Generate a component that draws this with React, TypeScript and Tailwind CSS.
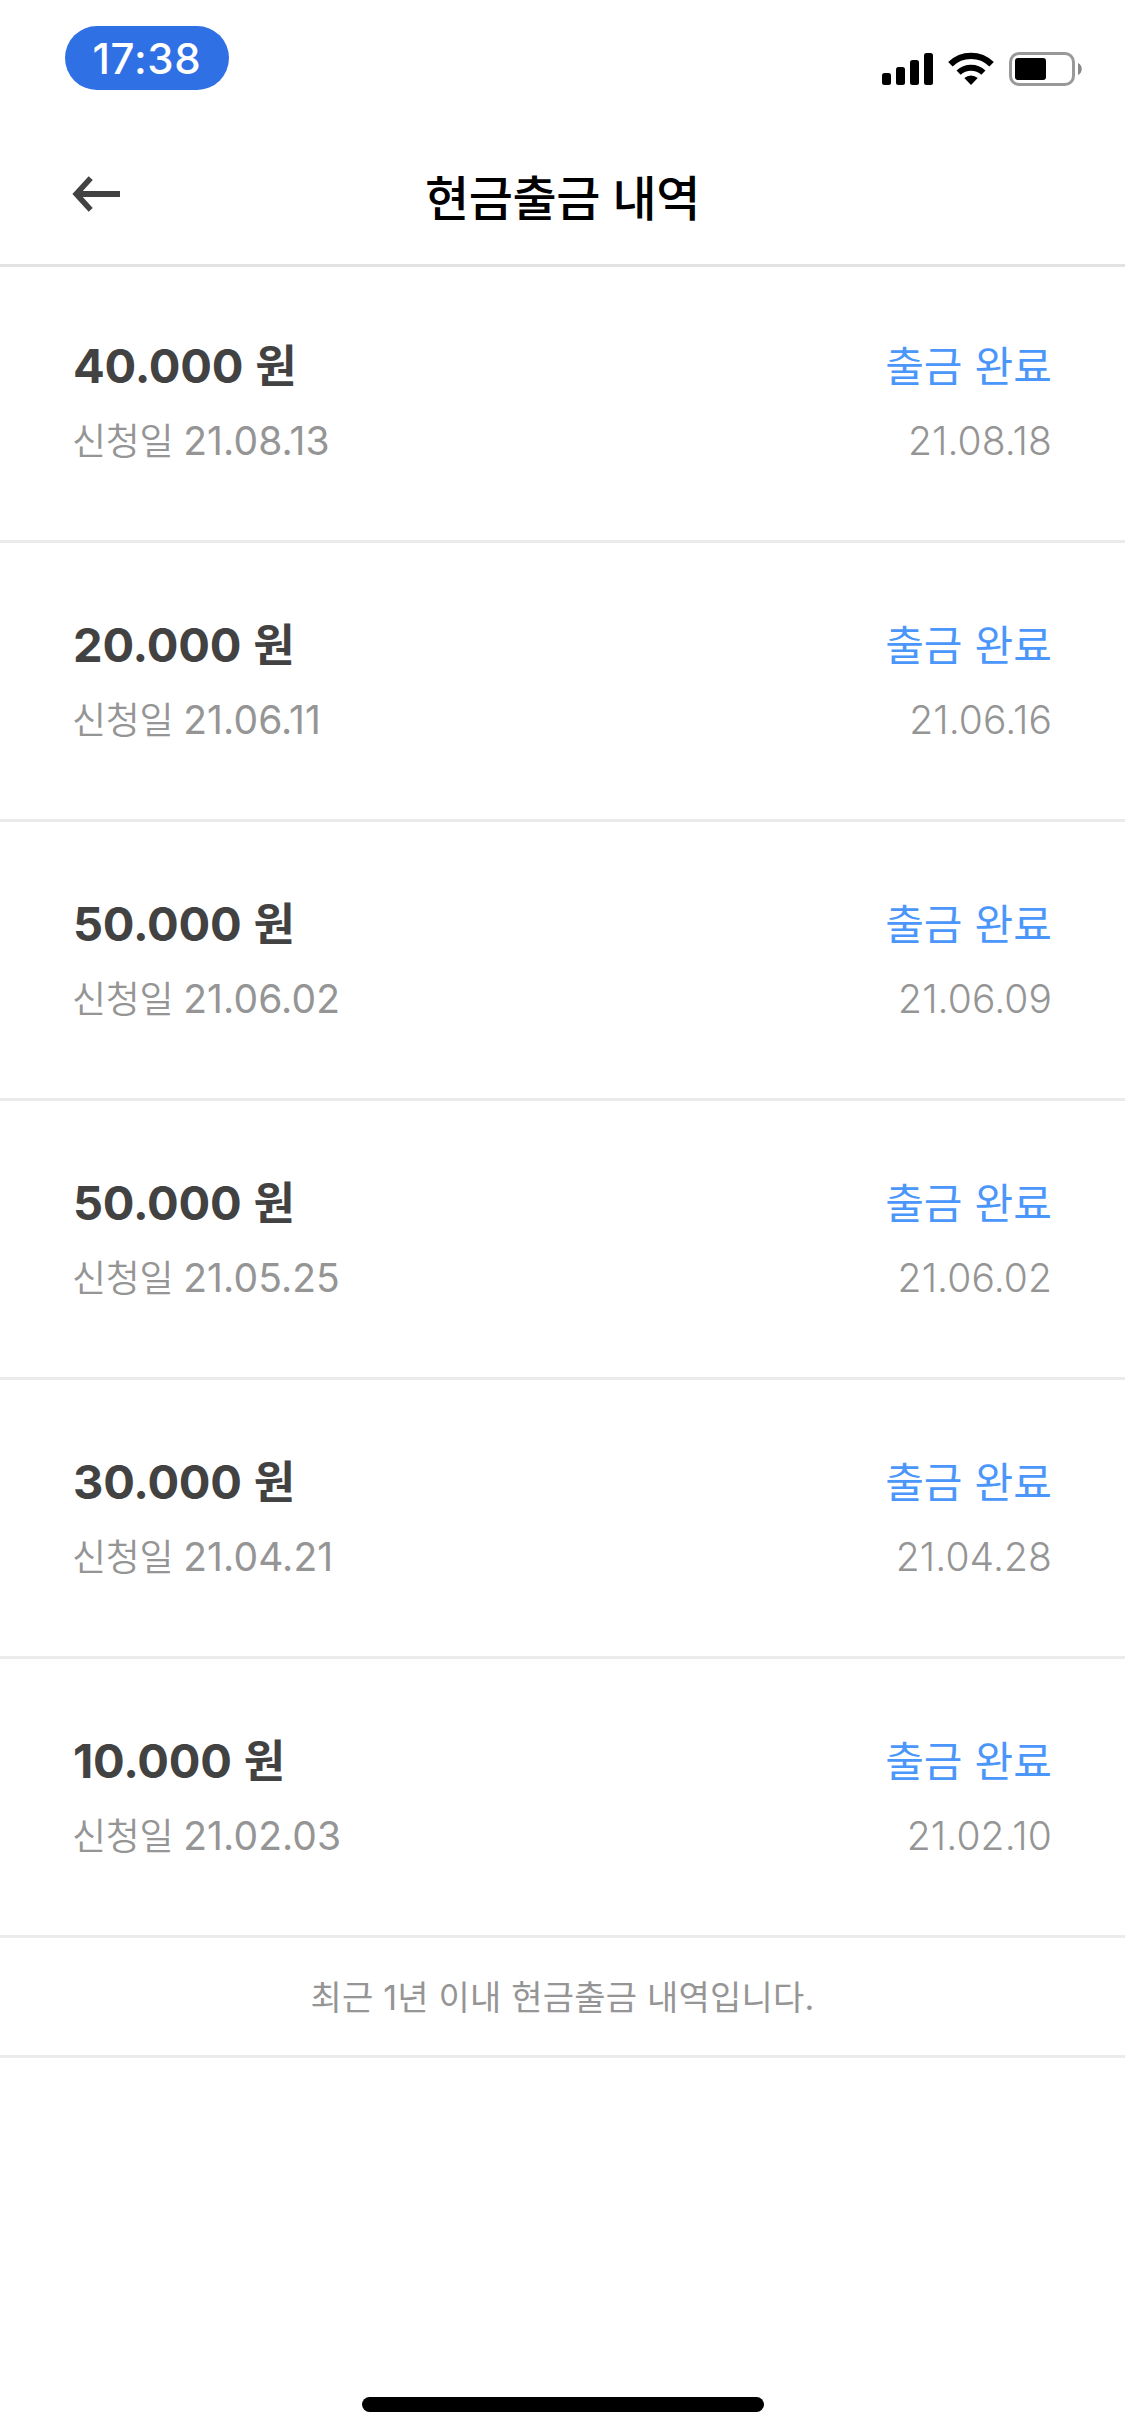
const withdrawals = [
  { amount: '40.000', requested: '21.08.13', completed: '21.08.18' },
  { amount: '20.000', requested: '21.06.11', completed: '21.06.16' },
  { amount: '50.000', requested: '21.06.02', completed: '21.06.09' },
  { amount: '50.000', requested: '21.05.25', completed: '21.06.02' },
  { amount: '30.000', requested: '21.04.21', completed: '21.04.28' },
  { amount: '10.000', requested: '21.02.03', completed: '21.02.10' },
]

function StatusBar() {
  return (
    <div className="flex h-[116px] items-start justify-between pl-[65px] pr-[42px]">
      <div className="mt-[26px] flex h-16 w-[164px] items-center justify-center rounded-full bg-[#3070e5] pt-px text-[42px] font-medium leading-none tracking-[0.7px] text-white">
        17:38
      </div>
      <div className="mt-[52px] flex items-start">
        <svg width="52" height="34" viewBox="0 0 52 34">
          <rect x="0" y="21" width="9" height="12" rx="2.5" />
          <rect x="14" y="15" width="9" height="18" rx="2.5" />
          <rect x="28" y="8" width="9" height="25" rx="2.5" />
          <rect x="42" y="1" width="9" height="32" rx="2.5" />
        </svg>
        <svg className="ml-[14px]" width="46" height="34" viewBox="0 0 46 34" fill="none" stroke="#000">
          <path d="M2.4 12.3a29.5 29.5 0 0 1 41.2 0" strokeWidth="6.4" />
          <path d="M10.6 20.6a18 18 0 0 1 24.8 0" strokeWidth="6" />
          <path d="M23 33l-6.7-7a10 10 0 0 1 13.4 0z" fill="#000" stroke="none" />
        </svg>
        <svg className="ml-[15px]" width="74" height="34" viewBox="0 0 74 34">
          <rect x="1.5" y="1.5" width="63" height="31" rx="8.5" fill="none" stroke="#999" strokeWidth="3" />
          <rect x="6" y="6" width="31" height="22" rx="3" />
          <path d="M69 11v12c5-2 5-10 0-12z" fill="#888" />
        </svg>
      </div>
    </div>
  )
}

function Header() {
  return (
    <header className="-mb-[3px] grid h-[151px] grid-cols-[1fr_auto_1fr] items-center border-b-[3px] border-[#e2e2e2] px-[72px] pt-3.5">
      <button type="button" aria-label="뒤로" className="-mt-1.5 justify-self-start">
        <svg width="48" height="38" viewBox="0 0 48 38" fill="none" stroke="#424242">
          <path d="M48 19H5" strokeWidth="6" />
          <path d="M18.7 3.2L4.2 19l14.5 15.8" strokeWidth="5.6" />
        </svg>
      </button>
      <h1 className="pt-1 text-[48px] font-medium leading-none tracking-[-0.4px] text-black">현금출금 내역</h1>
    </header>
  )
}

export default function App() {
  return (
    <div className="flex h-[2436px] w-[1125px] flex-col bg-white font-[Inter,'Noto_Sans_CJK_KR',sans-serif]">
      <StatusBar />
      <Header />

      <ul>
        {withdrawals.map((item) => (
          <li
            key={item.requested}
            className="flex h-[279px] justify-between border-b-[3px] border-[#ebebeb] pl-[72px] pr-[73px] pt-[72px]"
          >
            <div>
              <p className="flex h-[60px] items-baseline gap-[12px] pl-px text-[47px] font-bold leading-[60px] text-[#424242]">
                <span className="tracking-[-0.2px]">{item.amount}</span>
                <span className="text-[45px]">원</span>
              </p>
              <p className="mt-[15px] flex h-[60px] items-baseline gap-[10px] text-[39px] leading-[60px] text-[#959595]">
                <span className="text-[37px] font-[350] tracking-[-0.3px]">신청일</span>
                <span className="font-[370] tracking-[0.1px]">{item.requested}</span>
              </p>
            </div>
            <div className="flex flex-col items-end">
              <p className="h-[60px] text-[42px] leading-[61px] tracking-[0.1px] text-[#4a96fb]">출금 완료</p>
              <p className="mt-[15px] h-[60px] text-[39px] font-light leading-[60px] tracking-[0.1px] text-[#959595]">
                {item.completed}
              </p>
            </div>
          </li>
        ))}
      </ul>

      <p className="h-[120px] border-b-[3px] border-[#ebebeb] text-center text-[34px] leading-[119px] tracking-[0.2px] text-[#959595]">
        최근 1년 이내 현금출금 내역입니다.
      </p>

      {/* Home indicator */}
      <div className="mx-auto mb-[24px] mt-auto h-[15px] w-[402px] rounded-full bg-black" />
    </div>
  )
}
